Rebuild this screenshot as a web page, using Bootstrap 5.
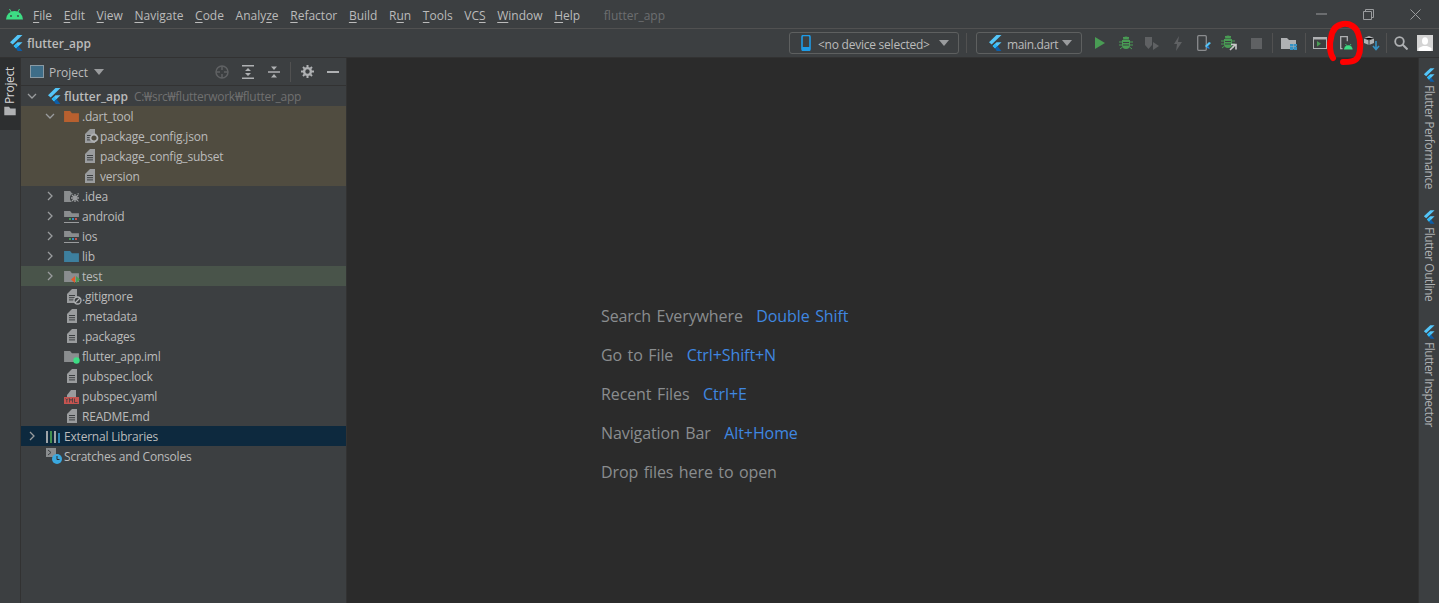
<!DOCTYPE html>
<html lang="en"><head><meta charset="utf-8"><title>flutter_app</title>
<link href="https://cdn.jsdelivr.net/npm/bootstrap@5.3.0/dist/css/bootstrap.min.css" rel="stylesheet">
<style>
html,body{height:100%;overflow:hidden}
body{background:#3c3f41;color:#bbb;font-family:"Open Sans","Noto Sans",sans-serif;font-size:12px;line-height:20px}
svg{display:block;flex:none}
.ide{width:1439px;height:603px;position:relative}
.titlebar{height:29px;border-bottom:1px solid #515151;padding:4px 0 0 6px}
.logo{margin:-4px 10px 0 0}
.menu-i{margin-right:11.65px;color:#bbb}
.menu-i u{text-underline-offset:2px}
.title-name{color:#6c6e70;margin-left:12px}
.win-group{margin-top:-4px}
.win-btn{width:47px;justify-content:center}
.toolbar{height:29px;border-bottom:1px solid #323232;padding:0 3px 0 9px}
.crumb{font-weight:600;margin-left:4px;color:#bbb;padding-top:2px}
.tb-box{height:22px;border:1px solid #5e6060;border-radius:3px;padding:0 9px 0 11px;color:#bbb}
.tb-label{padding-top:3px}
.tb-device{width:170px}
.tb-device .tb-label{margin-left:7px;letter-spacing:-.02em}
.tb-main{width:106px}
.tb-main .tb-label{margin-left:5px;letter-spacing:-.03em}
.tb-caret{width:0;height:0;border-left:5px solid transparent;border-right:5px solid transparent;border-top:6px solid #9a9c9e}
.tb-sep{width:1px;height:20px;background:#515151;margin:0 3px}
.tb-sep-a{margin:0 9px 0 7px}
.tb-sep-b{margin:0 1px 0 3px}
.tb-sep-c{margin:0 1px}
.tb-actions{margin-left:5px}
.tb-slot{width:26px;justify-content:center}
.tb-user{width:22px}
.work{height:545px}
.strip-l{width:21px;border-right:1px solid #323232}
.strip-tab{background:#2d2f30;height:72px;padding-top:9px;color:#d6d6d6}
.strip-folder{color:#afb1b3;margin-top:2px}
.vtext{writing-mode:vertical-rl;line-height:20px}
.vflip{transform:rotate(180deg);letter-spacing:-.3px}
.panel{width:326px;border-right:1px solid #323232}
.panel-head{height:28px;border-bottom:1px solid #323232;padding:0 7px 0 9px}
.panel-title{margin-left:5px;margin-right:6px;padding-top:2px}
.head-tools{margin-left:auto}
.ht-a{margin-right:12px}
.ht-b{margin-right:9px}
.ht-sep{width:1px;height:20px;background:#515151;margin-right:10px}
.ht-c{margin-right:13px}
.tree-row{height:20px;color:#bbb;white-space:nowrap;padding-top:2px;letter-spacing:-.2px}
.tree-row .arrow{width:16px;justify-content:center;margin-top:-2px}
.tree-row .ico{width:24px;margin-top:-2px;position:relative;height:16px;align-items:center}
.pad6{padding-left:6px}.pad7{padding-left:7px}.pad8{padding-left:8px}
.lv0{padding-left:3px}.lv1{padding-left:21px}.lv1n{padding-left:37px}.lv2{padding-left:39px}
.row-excl{background:#504c40}
.row-test{background:#49544a}
.row-sel{background:#0d293e}
.bold-name{font-weight:600;letter-spacing:0}
.path-hint{color:#707070;margin-left:6px;letter-spacing:-.25px}
.editor{flex:1;background:#2b2b2b;padding:248px 0 0 254px;font-size:16px;color:#8a8d8f;line-height:20px;word-spacing:1.5px;letter-spacing:-.1px}
.hint-row{height:39px;white-space:nowrap}
.hint-row b{font-weight:400;color:#3f87e0;margin-left:8px}
.strip-r{width:21px;border-left:1px solid #323232}
.side-tool{padding-top:10px;color:#aeb0b2}
.side-tool .vtext{margin-top:3px;font-size:12px;letter-spacing:-.45px}
.side-perf{height:142px}
.side-out{height:115px}
.scribble{position:absolute;left:1325px;top:17px}
</style></head>
<body>
<svg width="0" height="0" style="position:absolute">
<defs>
<symbol id="flutter" viewBox="0 0 14 16"><path d="M8.500 0H13.500L3.700 9.600 1 7.200z" fill="#54c5f8"/><path d="M13.500 7.200H8.500L4.600 11l2.500 2.400z" fill="#54c5f8"/><path d="M4.600 11l2.400-2.300 2.500 2.400-2.400 2.300z" fill="#29b6f6"/><path d="M7.100 13.400l2.400-2.300 3.900 4.900H8.700z" fill="#0d5ea8"/></symbol>
<symbol id="folder" viewBox="0 0 16 14"><path d="M0 1h6.500l2 2.500H16V13H0z" fill="currentColor"/></symbol>
<symbol id="file" viewBox="0 0 12 16"><path d="M1 6l5-5h5v14H1z" fill="#9a9c9e"/><path d="M3 7.500h6M3 9.700h6M3 11.900h6" stroke="#3c3f41" stroke-width="1"/></symbol>
<symbol id="chev-r" viewBox="0 0 10 10"><path d="M3 1l4 4-4 4" fill="none" stroke="#9a9c9e" stroke-width="1.300"/></symbol>
<symbol id="chev-d" viewBox="0 0 10 10"><path d="M1 3l4 4 4-4" fill="none" stroke="#9a9c9e" stroke-width="1.300"/></symbol>
<symbol id="bug" viewBox="0 0 14 14"><path d="M3 4h8v5a4 4 0 0 1-8 0z" fill="currentColor"/><path d="M4 3.500a3 3 0 0 1 6 0z" fill="currentColor"/><path d="M4 1l2 2M10 1L8 3M0 6h3M11 6h3M0 9h3M11 9h3M1 13l2.500-2M13 13l-2.500-2" stroke="currentColor"/><path d="M4 6.500h6M4 9h6" stroke="#3c3f41"/></symbol>
</defs>
</svg>
<div class="ide d-flex flex-column">
  <header class="titlebar d-flex align-items-center">
    <svg class="logo" width="17" height="12" viewBox="0 0 17 12"><path d="M0 11.500a8.500 8.500 0 0 1 17 0z" fill="#3ddc84"/><path d="M3.500 1l2 3.500M13.500 1l-2 3.500" stroke="#3ddc84" stroke-width="1"/><circle cx="5" cy="8" r=".9" fill="#3c3f41"/><circle cx="12" cy="8" r=".9" fill="#3c3f41"/></svg>
    <span class="menu-i"><u>F</u>ile</span><span class="menu-i"><u>E</u>dit</span><span class="menu-i"><u>V</u>iew</span><span class="menu-i"><u>N</u>avigate</span><span class="menu-i"><u>C</u>ode</span><span class="menu-i">Analy<u>z</u>e</span><span class="menu-i"><u>R</u>efactor</span><span class="menu-i"><u>B</u>uild</span><span class="menu-i">R<u>u</u>n</span><span class="menu-i"><u>T</u>ools</span><span class="menu-i">VC<u>S</u></span><span class="menu-i"><u>W</u>indow</span><span class="menu-i"><u>H</u>elp</span>
    <span class="title-name">flutter_app</span>
    <div class="ms-auto d-flex align-items-center win-group">
      <div class="win-btn d-flex"><svg width="11" height="2"><path d="M0 1h11" stroke="#9a9c9e"/></svg></div>
      <div class="win-btn d-flex"><svg width="11" height="11"><path d="M.5 2.500h8v8h-8zM2.500 2.500v-2h8v8h-2" fill="none" stroke="#9a9c9e"/></svg></div>
      <div class="win-btn d-flex"><svg width="11" height="11"><path d="M.5.5l10 10M10.500.5l-10 10" stroke="#9a9c9e"/></svg></div>
    </div>
  </header>
  <div class="toolbar d-flex align-items-center">
    <svg width="14" height="16"><use href="#flutter"/></svg>
    <span class="crumb">flutter_app</span>
    <div class="ms-auto d-flex align-items-center">
      <div class="tb-box tb-device d-flex align-items-center">
        <svg width="10" height="16" viewBox="0 0 10 16"><rect x="1" y=".5" width="8" height="15" rx="1.500" fill="none" stroke="#1e9be6" stroke-width="1.600"/><rect x="1" y="12" width="8" height="3" fill="#1e9be6"/></svg>
        <span class="tb-label">&lt;no device selected&gt;</span><span class="tb-caret ms-auto"></span>
      </div>
      <span class="tb-sep tb-sep-a"></span>
      <div class="tb-box tb-main d-flex align-items-center">
        <svg width="14" height="16"><use href="#flutter"/></svg>
        <span class="tb-label">main.dart</span><span class="tb-caret ms-auto"></span>
      </div>
      <div class="d-flex align-items-center tb-actions">
        <div class="tb-slot d-flex"><svg width="12" height="14"><path d="M1 1l10 6-10 6z" fill="#499c54"/></svg></div>
        <div class="tb-slot d-flex" style="color:#499c54"><svg width="14" height="14"><use href="#bug"/></svg></div>
        <div class="tb-slot d-flex"><svg width="16" height="14" viewBox="0 0 16 14"><path d="M1 1h7v8l-3.500 4L1 9z" fill="#5f6163"/><path d="M9 6l6 4-6 4z" fill="#5f6163"/></svg></div>
        <div class="tb-slot d-flex"><svg width="10" height="15" viewBox="0 0 10 15"><path d="M6 0L1 8h3l-1 7 6-9H5z" fill="#5f6163"/></svg></div>
        <div class="tb-slot d-flex"><svg width="14" height="16" viewBox="0 0 14 16"><rect x=".7" y=".7" width="8.600" height="14.600" rx="1" fill="none" stroke="#8a8c8e" stroke-width="1.300"/><path d="M12 7L8 11l1.500 1.500L14 8z" fill="#54c5f8"/><path d="M9.500 12.500L11 11l2 2.500h-2z" fill="#1e88e5"/></svg></div>
        <div class="tb-slot d-flex" style="color:#499c54"><svg width="18" height="16" viewBox="0 0 18 16"><svg width="14" height="14"><use href="#bug"/></svg><path d="M9 15l5-5M10 9.500h5v5" fill="none" stroke="#c8c8c8" stroke-width="1.600"/></svg></div>
        <div class="tb-slot d-flex"><svg width="11" height="11"><rect width="11" height="11" fill="#5f6163"/></svg></div>
      </div>
      <span class="tb-sep"></span>
      <div class="tb-slot d-flex"><svg width="16" height="13" viewBox="0 0 16 13"><path d="M0 1h6l2 2h7v9H0z" fill="#afb1b3"/><path d="M9 7h3v2.500H9zM12.500 7H16v2.500h-3.500zM9 10h3v3H9zM12.500 10H16v3h-3.500z" fill="#3592c4"/></svg></div>
      <span class="tb-sep tb-sep-b"></span>
      <div class="tb-slot d-flex"><svg width="14" height="12" viewBox="0 0 14 12"><rect x=".5" y=".5" width="13" height="11" fill="none" stroke="#afb1b3"/><path d="M.5.5h13v2H.5z" fill="#afb1b3"/><path d="M4 4l4 2.800L4 9.500z" fill="#499c54"/></svg></div>
      <div class="tb-slot d-flex"><svg width="13" height="14" viewBox="0 0 13 14"><path d="M2.500 12.600H.7V.7h6.600v4.500" fill="none" stroke="#afb1b3" stroke-width="1.300"/><path d="M4 13.500a4.300 4.300 0 0 1 8.600 0z" fill="#3ddc84"/><path d="M5.500 8l1 1.500M11 8l-1 1.500" stroke="#3ddc84" stroke-width=".8"/></svg></div>
      <div class="tb-slot d-flex"><svg width="16" height="16" viewBox="0 0 16 16"><path d="M5 1l5 2v5l-5 2-5-2V3z" fill="#afb1b3"/><path d="M5 5v5M0 3l5 2 5-2" stroke="#3c3f41"/><path d="M12 6v8M9 11l3 3.500 3-3.500" fill="none" stroke="#3592c4" stroke-width="1.600"/></svg></div>
      <span class="tb-sep tb-sep-c"></span>
      <div class="tb-slot d-flex"><svg width="14" height="14" viewBox="0 0 14 14"><circle cx="5.500" cy="5.500" r="4.300" fill="none" stroke="#afb1b3" stroke-width="1.800"/><path d="M8.500 8.500l5 5" stroke="#afb1b3" stroke-width="2"/></svg></div>
      <div class="tb-slot tb-user d-flex"><svg width="16" height="16" viewBox="0 0 16 16"><rect width="16" height="16" fill="#d4d4d4"/><ellipse cx="8" cy="6" rx="3" ry="3.800" fill="#fff"/><path d="M1.500 16v-3l4.500-2h4l4.500 2v3z" fill="#fff"/></svg></div>
    </div>
  </div>
  <div class="work d-flex">
    <aside class="strip-l">
      <div class="strip-tab d-flex flex-column align-items-center">
        <span class="vtext vflip">Project</span>
        <svg class="strip-folder" width="12" height="10"><use href="#folder"/></svg>
      </div>
    </aside>
    <section class="panel">
      <div class="panel-head d-flex align-items-center">
        <svg width="14" height="13" viewBox="0 0 14 13"><rect x=".5" y=".5" width="13" height="12" fill="#3e6d88" stroke="#8a9aa4"/></svg>
        <span class="panel-title">Project</span><span class="tb-caret"></span>
        <div class="head-tools d-flex align-items-center">
          <svg class="ht-a" width="14" height="14" viewBox="0 0 14 14"><circle cx="7" cy="7" r="6" fill="none" stroke="#5f6163" stroke-width="1.500"/><path d="M7 1v4M7 9v4M1 7h4M9 7h4" stroke="#5f6163" stroke-width="1.500"/></svg>
          <svg class="ht-a" width="14" height="14" viewBox="0 0 14 14"><path d="M1 .8h12M1 13.200h12" stroke="#afb1b3" stroke-width="1.500"/><path d="M7 3l3 3H4zM7 11l3-3H4z" fill="#afb1b3"/></svg>
          <svg class="ht-b" width="14" height="14" viewBox="0 0 14 14"><path d="M1 7h12" stroke="#afb1b3" stroke-width="1.500"/><path d="M7 5l3-3.500H4zM7 9l3 3.500H4z" fill="#afb1b3"/></svg>
          <span class="ht-sep"></span>
          <svg class="ht-c" width="13" height="13" viewBox="0 0 13 13"><circle cx="6.500" cy="6.500" r="3.400" fill="none" stroke="#afb1b3" stroke-width="2.400"/><path d="M6.500 0v2.500M6.500 10.500V13M0 6.500h2.500M10.500 6.500H13M2 2l1.600 1.600M9.400 9.400L11 11M2 11l1.600-1.600M9.400 3.600L11 2" stroke="#afb1b3" stroke-width="2"/></svg>
          <svg width="12" height="2"><path d="M0 1h12" stroke="#afb1b3" stroke-width="2"/></svg>
        </div>
      </div>
      <div class="tree-row d-flex align-items-center lv0">
        <span class="arrow d-flex"><svg width="10" height="10"><use href="#chev-d"/></svg></span>
        <span class="ico pad7 d-flex"><svg width="14" height="16"><use href="#flutter"/></svg></span>
        <span class="bold-name">flutter_app</span><span class="path-hint">C:₩src₩flutterwork₩flutter_app</span>
      </div>
      <div class="tree-row row-excl d-flex align-items-center lv1">
        <span class="arrow d-flex"><svg width="10" height="10"><use href="#chev-d"/></svg></span>
        <span class="ico pad6 d-flex" style="color:#b8602f"><svg width="15" height="13"><use href="#folder"/></svg></span>.dart_tool
      </div>
      <div class="tree-row row-excl d-flex align-items-center lv2"><span class="arrow"></span><span class="ico pad8 d-flex"><svg width="12" height="16"><use href="#file"/></svg><svg class="position-absolute" style="left:13px;top:5px" width="10" height="10" viewBox="0 0 10 10"><circle cx="5" cy="5" r="3.500" fill="#504c40" stroke="#afb1b3" stroke-width="1.800"/></svg></span>package_config.json</div>
      <div class="tree-row row-excl d-flex align-items-center lv2"><span class="arrow"></span><span class="ico pad8 d-flex"><svg width="12" height="16"><use href="#file"/></svg></span>package_config_subset</div>
      <div class="tree-row row-excl d-flex align-items-center lv2"><span class="arrow"></span><span class="ico pad8 d-flex"><svg width="12" height="16"><use href="#file"/></svg></span>version</div>
      <div class="tree-row d-flex align-items-center lv1"><span class="arrow d-flex"><svg width="10" height="10"><use href="#chev-r"/></svg></span><span class="ico pad6 d-flex" style="color:#8a8d8f"><svg width="15" height="13"><use href="#folder"/></svg><svg class="position-absolute" style="left:12px;top:5px" width="10" height="10" viewBox="0 0 10 10"><path d="M5 0v10M0 5h10M1.500 1.500l7 7M8.500 1.500l-7 7" stroke="#3c3f41" stroke-width="3.500"/><path d="M5 1v8M1 5h8M2 2l6 6M8 2L2 8" stroke="#9a9c9e" stroke-width="1.300"/></svg></span>.idea</div>
      <div class="tree-row d-flex align-items-center lv1"><span class="arrow d-flex"><svg width="10" height="10"><use href="#chev-r"/></svg></span><span class="ico pad6 d-flex" style="color:#8a8d8f"><svg width="15" height="13"><use href="#folder"/></svg><svg class="position-absolute" style="left:6px;top:9px" width="15" height="6" viewBox="0 0 15 6"><path d="M0 0h15v6H0z" fill="#3c3f41"/><path d="M0 5.500h15" stroke="#9a9c9e"/><path d="M5 1h2v2H5z" fill="#499c54"/><path d="M8 1h2v2H8z" fill="#3592c4"/><path d="M11 1h2v2h-2z" fill="#c75450"/></svg></span>android</div>
      <div class="tree-row d-flex align-items-center lv1"><span class="arrow d-flex"><svg width="10" height="10"><use href="#chev-r"/></svg></span><span class="ico pad6 d-flex" style="color:#8a8d8f"><svg width="15" height="13"><use href="#folder"/></svg><svg class="position-absolute" style="left:6px;top:9px" width="15" height="6" viewBox="0 0 15 6"><path d="M0 0h15v6H0z" fill="#3c3f41"/><path d="M0 5.500h15" stroke="#9a9c9e"/><path d="M5 1h2v2H5z" fill="#499c54"/><path d="M8 1h2v2H8z" fill="#3592c4"/><path d="M11 1h2v2h-2z" fill="#c75450"/></svg></span>ios</div>
      <div class="tree-row d-flex align-items-center lv1"><span class="arrow d-flex"><svg width="10" height="10"><use href="#chev-r"/></svg></span><span class="ico pad6 d-flex" style="color:#3d7f9e"><svg width="15" height="13"><use href="#folder"/></svg></span>lib</div>
      <div class="tree-row row-test d-flex align-items-center lv1"><span class="arrow d-flex"><svg width="10" height="10"><use href="#chev-r"/></svg></span><span class="ico pad6 d-flex" style="color:#8a8d8f"><svg width="15" height="13"><use href="#folder"/></svg><svg class="position-absolute" style="left:13px;top:7px" width="9" height="9" viewBox="0 0 9 9"><path d="M4 1L0 4.500 4 8z" fill="#e05a2b"/><path d="M5 1l4 3.500L5 8z" fill="#499c54"/></svg></span>test</div>
      <div class="tree-row d-flex align-items-center lv1n"><span class="ico pad8 d-flex"><svg width="12" height="16"><use href="#file"/></svg><svg class="position-absolute" style="left:15px;top:8px" width="9" height="9" viewBox="0 0 9 9"><circle cx="4.500" cy="4.500" r="3.500" fill="#3c3f41" stroke="#afb1b3" stroke-width="1.300"/><path d="M2 7l5-5" stroke="#afb1b3" stroke-width="1.300"/></svg></span>.gitignore</div>
      <div class="tree-row d-flex align-items-center lv1n"><span class="ico pad8 d-flex"><svg width="12" height="16"><use href="#file"/></svg></span>.metadata</div>
      <div class="tree-row d-flex align-items-center lv1n"><span class="ico pad8 d-flex"><svg width="12" height="16"><use href="#file"/></svg></span>.packages</div>
      <div class="tree-row d-flex align-items-center lv1n"><span class="ico pad6 d-flex" style="color:#8a8d8f"><svg width="15" height="13"><use href="#folder"/></svg><svg class="position-absolute" style="left:15px;top:9px" width="7" height="7" viewBox="0 0 7 7"><circle cx="3.500" cy="3.500" r="3.200" fill="#3ddc84"/></svg></span>flutter_app.iml</div>
      <div class="tree-row d-flex align-items-center lv1n"><span class="ico pad8 d-flex"><svg width="12" height="16"><use href="#file"/></svg></span>pubspec.lock</div>
      <div class="tree-row d-flex align-items-center lv1n"><span class="ico pad6 d-flex"><svg width="15" height="15" viewBox="0 0 15 15"><path d="M3 6l4-5h5v7H3z" fill="#9a9c9e"/><rect y="8" width="15" height="7" fill="#c75450"/><path d="M1.500 9.500l1.300 1.500 1.300-1.500M2.800 11v2.500M5.500 13.500v-4l1.500 2 1.500-2v4M10.500 9.500v4h3" fill="none" stroke="#3c3f41" stroke-width=".8"/></svg></span>pubspec.yaml</div>
      <div class="tree-row d-flex align-items-center lv1n"><span class="ico pad8 d-flex"><svg width="12" height="16"><use href="#file"/></svg></span>README.md</div>
      <div class="tree-row row-sel d-flex align-items-center lv0"><span class="arrow d-flex"><svg width="10" height="10"><use href="#chev-r"/></svg></span><span class="ico pad6 d-flex"><svg width="15" height="13" viewBox="0 0 15 13"><path d="M1 1v12M9 1v12" stroke="#afb1b3" stroke-width="1.800"/><path d="M5 1v12" stroke="#499c54" stroke-width="1.800"/><path d="M13 3v10" stroke="#3592c4" stroke-width="1.800"/></svg></span>External Libraries</div>
      <div class="tree-row d-flex align-items-center lv0"><span class="arrow"></span><span class="ico pad6 d-flex"><svg width="16" height="16" viewBox="0 0 16 16"><rect width="10" height="9" fill="#8a8d8f"/><path d="M2 2l3 2.500L2 7" fill="none" stroke="#3c3f41"/><circle cx="11" cy="11" r="5" fill="#3aa8df"/><path d="M11 8v3.500h2.500" fill="none" stroke="#2b2b2b"/></svg></span>Scratches and Consoles</div>
    </section>
    <main class="editor">
      <div class="hint-row">Search Everywhere <b>Double Shift</b></div>
      <div class="hint-row">Go to File <b>Ctrl+Shift+N</b></div>
      <div class="hint-row">Recent Files <b>Ctrl+E</b></div>
      <div class="hint-row">Navigation Bar <b>Alt+Home</b></div>
      <div class="hint-row">Drop files here to open</div>
    </main>
    <aside class="strip-r">
      <div class="side-tool side-perf d-flex flex-column align-items-center"><svg width="12" height="14"><use href="#flutter"/></svg><span class="vtext">Flutter Performance</span></div>
      <div class="side-tool side-out d-flex flex-column align-items-center"><svg width="12" height="14"><use href="#flutter"/></svg><span class="vtext">Flutter Outline</span></div>
      <div class="side-tool d-flex flex-column align-items-center"><svg width="12" height="14"><use href="#flutter"/></svg><span class="vtext">Flutter Inspector</span></div>
    </aside>
  </div>
  <svg class="scribble" width="42" height="50" viewBox="1325 17 42 50"><path d="M1333 58c-3-4-4-14-2-20 1-8 5-13 12-14 7-1 13 3 15 9 3 8 3 18 0 24-3 5-9 5-15 5" fill="none" stroke="#f00" stroke-width="6" stroke-linecap="round"/></svg>
</div>
</body></html>
